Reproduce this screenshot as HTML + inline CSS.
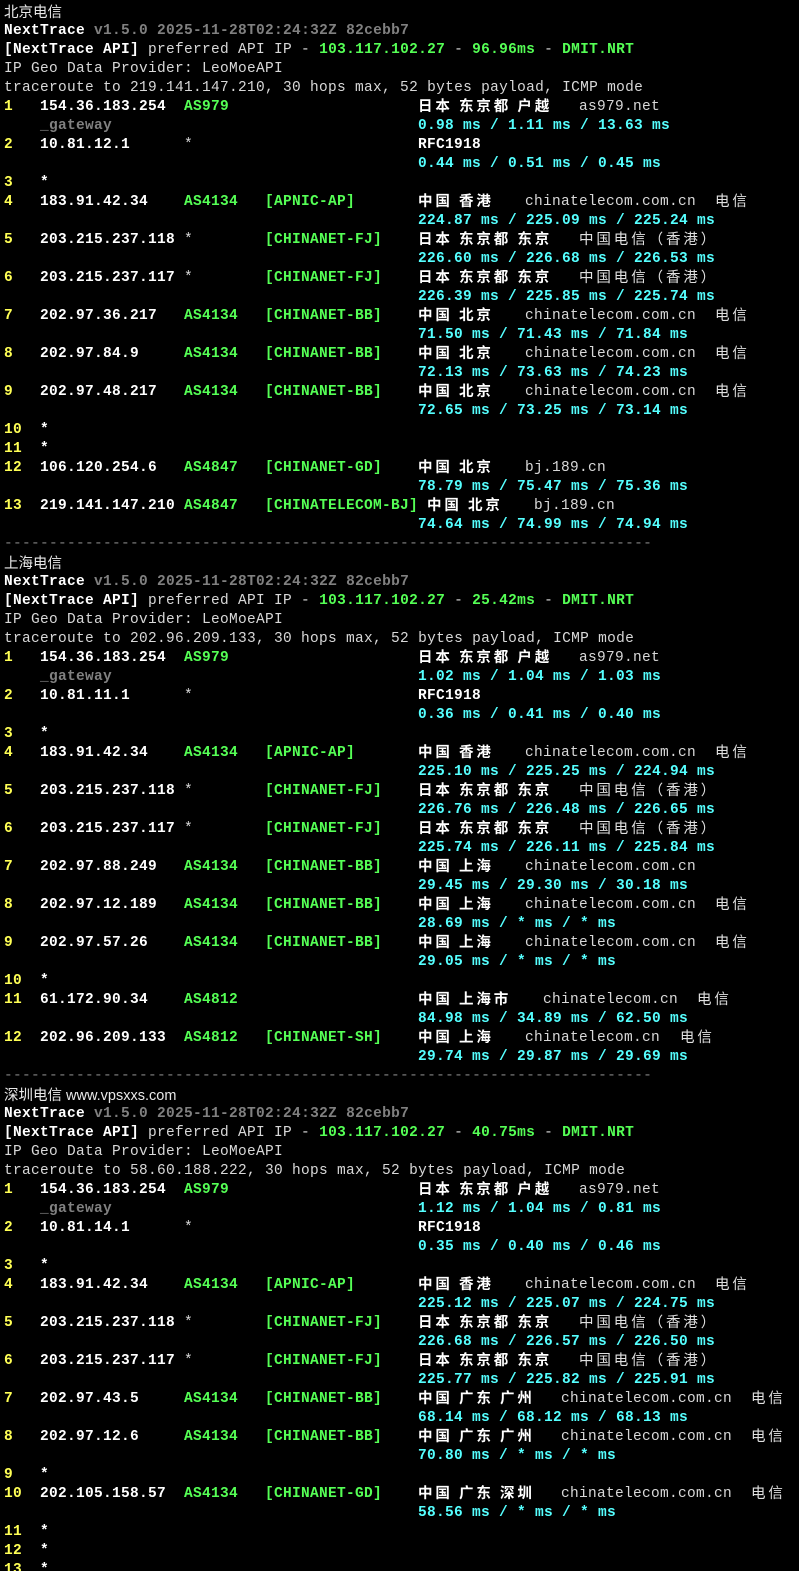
<!DOCTYPE html>
<html><head><meta charset="utf-8"><style>
html,body{margin:0;padding:0;background:#000;width:799px;height:1571px;overflow:hidden}
body{position:relative;font-family:"Liberation Mono","Noto Sans CJK SC",monospace;font-size:14.5px;color:#d8d8d8}
.l{position:absolute;left:0;width:799px;height:19px;line-height:19px;white-space:pre}
.l span{position:absolute;top:0;letter-spacing:0.3px}
.y{color:#ffff55;font-weight:bold}
.w{color:#fff;font-weight:bold}
.g{color:#55ff55;font-weight:bold}
.gy{color:#808080;font-weight:bold}
.gn{color:#808080}
.c{color:#55ffff;font-weight:bold}
.l span.z{font-family:"Liberation Sans","Noto Sans CJK SC",sans-serif;color:#e8e8e8;letter-spacing:0;top:1px}
.l span.cj{font-family:"Noto Sans CJK SC",sans-serif;font-weight:bold;color:#fff;letter-spacing:2.9px;top:-2px}
.l span.cn{font-family:"Noto Sans CJK SC",sans-serif;color:#e0e0e0;letter-spacing:2.9px;top:-2px}
</style></head><body>

<!-- Section 1 -->
<div class="l" style="top:3px"><span class="z" style="left:4px">北京电信</span></div>
<div class="l" style="top:22px"><span style="left:4px"><b style="color:#fff">NextTrace</b> <b class="gy">v1.5.0 2025-11-28T02:24:32Z 82cebb7</b></span></div>
<div class="l" style="top:41px"><span style="left:4px"><b style="color:#fff">[NextTrace API]</b> preferred API IP - <b class="g">103.117.102.27</b> - <b class="g">96.96ms</b> - <b class="g">DMIT.NRT</b></span></div>
<div class="l" style="top:60px"><span style="left:4px">IP Geo Data Provider: LeoMoeAPI</span></div>
<div class="l" style="top:79px"><span style="left:4px">traceroute to 219.141.147.210, 30 hops max, 52 bytes payload, ICMP mode</span></div>
<div class="l" style="top:98px"><span class="y" style="left:4px">1</span><span class="w" style="left:40px">154.36.183.254</span><span class="g" style="left:184px">AS979</span><span class="cj" style="left:418px">日本 东京都 户越</span><span style="left:579px">as979.net</span></div>
<div class="l" style="top:117px"><span class="gy" style="left:40px">_gateway</span><span class="c" style="left:418px">0.98 ms / 1.11 ms / 13.63 ms</span></div>
<div class="l" style="top:136px"><span class="y" style="left:4px">2</span><span class="w" style="left:40px">10.81.12.1</span><span style="left:184px">*</span><span class="w" style="left:418px">RFC1918</span></div>
<div class="l" style="top:155px"><span class="c" style="left:418px">0.44 ms / 0.51 ms / 0.45 ms</span></div>
<div class="l" style="top:174px"><span class="y" style="left:4px">3</span><span class="w" style="left:40px">*</span></div>
<div class="l" style="top:193px"><span class="y" style="left:4px">4</span><span class="w" style="left:40px">183.91.42.34</span><span class="g" style="left:184px">AS4134</span><span class="g" style="left:265px">[APNIC-AP]</span><span class="cj" style="left:418px">中国 香港</span><span style="left:525px">chinatelecom.com.cn</span><span class="cn" style="left:715px">电信</span></div>
<div class="l" style="top:212px"><span class="c" style="left:418px">224.87 ms / 225.09 ms / 225.24 ms</span></div>
<div class="l" style="top:231px"><span class="y" style="left:4px">5</span><span class="w" style="left:40px">203.215.237.118</span><span style="left:184px">*</span><span class="g" style="left:265px">[CHINANET-FJ]</span><span class="cj" style="left:418px">日本 东京都 东京</span><span class="cn" style="left:579px">中国电信（香港）</span></div>
<div class="l" style="top:250px"><span class="c" style="left:418px">226.60 ms / 226.68 ms / 226.53 ms</span></div>
<div class="l" style="top:269px"><span class="y" style="left:4px">6</span><span class="w" style="left:40px">203.215.237.117</span><span style="left:184px">*</span><span class="g" style="left:265px">[CHINANET-FJ]</span><span class="cj" style="left:418px">日本 东京都 东京</span><span class="cn" style="left:579px">中国电信（香港）</span></div>
<div class="l" style="top:288px"><span class="c" style="left:418px">226.39 ms / 225.85 ms / 225.74 ms</span></div>
<div class="l" style="top:307px"><span class="y" style="left:4px">7</span><span class="w" style="left:40px">202.97.36.217</span><span class="g" style="left:184px">AS4134</span><span class="g" style="left:265px">[CHINANET-BB]</span><span class="cj" style="left:418px">中国 北京</span><span style="left:525px">chinatelecom.com.cn</span><span class="cn" style="left:715px">电信</span></div>
<div class="l" style="top:326px"><span class="c" style="left:418px">71.50 ms / 71.43 ms / 71.84 ms</span></div>
<div class="l" style="top:345px"><span class="y" style="left:4px">8</span><span class="w" style="left:40px">202.97.84.9</span><span class="g" style="left:184px">AS4134</span><span class="g" style="left:265px">[CHINANET-BB]</span><span class="cj" style="left:418px">中国 北京</span><span style="left:525px">chinatelecom.com.cn</span><span class="cn" style="left:715px">电信</span></div>
<div class="l" style="top:364px"><span class="c" style="left:418px">72.13 ms / 73.63 ms / 74.23 ms</span></div>
<div class="l" style="top:383px"><span class="y" style="left:4px">9</span><span class="w" style="left:40px">202.97.48.217</span><span class="g" style="left:184px">AS4134</span><span class="g" style="left:265px">[CHINANET-BB]</span><span class="cj" style="left:418px">中国 北京</span><span style="left:525px">chinatelecom.com.cn</span><span class="cn" style="left:715px">电信</span></div>
<div class="l" style="top:402px"><span class="c" style="left:418px">72.65 ms / 73.25 ms / 73.14 ms</span></div>
<div class="l" style="top:421px"><span class="y" style="left:4px">10</span><span class="w" style="left:40px">*</span></div>
<div class="l" style="top:440px"><span class="y" style="left:4px">11</span><span class="w" style="left:40px">*</span></div>
<div class="l" style="top:459px"><span class="y" style="left:4px">12</span><span class="w" style="left:40px">106.120.254.6</span><span class="g" style="left:184px">AS4847</span><span class="g" style="left:265px">[CHINANET-GD]</span><span class="cj" style="left:418px">中国 北京</span><span style="left:525px">bj.189.cn</span></div>
<div class="l" style="top:478px"><span class="c" style="left:418px">78.79 ms / 75.47 ms / 75.36 ms</span></div>
<div class="l" style="top:497px"><span class="y" style="left:4px">13</span><span class="w" style="left:40px">219.141.147.210</span><span class="g" style="left:184px">AS4847</span><span class="g" style="left:265px">[CHINATELECOM-BJ]</span><span class="cj" style="left:427px">中国 北京</span><span style="left:534px">bj.189.cn</span></div>
<div class="l" style="top:516px"><span class="c" style="left:418px">74.64 ms / 74.99 ms / 74.94 ms</span></div>
<div class="l" style="top:535px"><span class="gn" style="left:4px">------------------------------------------------------------------------</span></div>

<!-- Section 2 -->
<div class="l" style="top:554px"><span class="z" style="left:4px">上海电信</span></div>
<div class="l" style="top:573px"><span style="left:4px"><b style="color:#fff">NextTrace</b> <b class="gy">v1.5.0 2025-11-28T02:24:32Z 82cebb7</b></span></div>
<div class="l" style="top:592px"><span style="left:4px"><b style="color:#fff">[NextTrace API]</b> preferred API IP - <b class="g">103.117.102.27</b> - <b class="g">25.42ms</b> - <b class="g">DMIT.NRT</b></span></div>
<div class="l" style="top:611px"><span style="left:4px">IP Geo Data Provider: LeoMoeAPI</span></div>
<div class="l" style="top:630px"><span style="left:4px">traceroute to 202.96.209.133, 30 hops max, 52 bytes payload, ICMP mode</span></div>
<div class="l" style="top:649px"><span class="y" style="left:4px">1</span><span class="w" style="left:40px">154.36.183.254</span><span class="g" style="left:184px">AS979</span><span class="cj" style="left:418px">日本 东京都 户越</span><span style="left:579px">as979.net</span></div>
<div class="l" style="top:668px"><span class="gy" style="left:40px">_gateway</span><span class="c" style="left:418px">1.02 ms / 1.04 ms / 1.03 ms</span></div>
<div class="l" style="top:687px"><span class="y" style="left:4px">2</span><span class="w" style="left:40px">10.81.11.1</span><span style="left:184px">*</span><span class="w" style="left:418px">RFC1918</span></div>
<div class="l" style="top:706px"><span class="c" style="left:418px">0.36 ms / 0.41 ms / 0.40 ms</span></div>
<div class="l" style="top:725px"><span class="y" style="left:4px">3</span><span class="w" style="left:40px">*</span></div>
<div class="l" style="top:744px"><span class="y" style="left:4px">4</span><span class="w" style="left:40px">183.91.42.34</span><span class="g" style="left:184px">AS4134</span><span class="g" style="left:265px">[APNIC-AP]</span><span class="cj" style="left:418px">中国 香港</span><span style="left:525px">chinatelecom.com.cn</span><span class="cn" style="left:715px">电信</span></div>
<div class="l" style="top:763px"><span class="c" style="left:418px">225.10 ms / 225.25 ms / 224.94 ms</span></div>
<div class="l" style="top:782px"><span class="y" style="left:4px">5</span><span class="w" style="left:40px">203.215.237.118</span><span style="left:184px">*</span><span class="g" style="left:265px">[CHINANET-FJ]</span><span class="cj" style="left:418px">日本 东京都 东京</span><span class="cn" style="left:579px">中国电信（香港）</span></div>
<div class="l" style="top:801px"><span class="c" style="left:418px">226.76 ms / 226.48 ms / 226.65 ms</span></div>
<div class="l" style="top:820px"><span class="y" style="left:4px">6</span><span class="w" style="left:40px">203.215.237.117</span><span style="left:184px">*</span><span class="g" style="left:265px">[CHINANET-FJ]</span><span class="cj" style="left:418px">日本 东京都 东京</span><span class="cn" style="left:579px">中国电信（香港）</span></div>
<div class="l" style="top:839px"><span class="c" style="left:418px">225.74 ms / 226.11 ms / 225.84 ms</span></div>
<div class="l" style="top:858px"><span class="y" style="left:4px">7</span><span class="w" style="left:40px">202.97.88.249</span><span class="g" style="left:184px">AS4134</span><span class="g" style="left:265px">[CHINANET-BB]</span><span class="cj" style="left:418px">中国 上海</span><span style="left:525px">chinatelecom.com.cn</span></div>
<div class="l" style="top:877px"><span class="c" style="left:418px">29.45 ms / 29.30 ms / 30.18 ms</span></div>
<div class="l" style="top:896px"><span class="y" style="left:4px">8</span><span class="w" style="left:40px">202.97.12.189</span><span class="g" style="left:184px">AS4134</span><span class="g" style="left:265px">[CHINANET-BB]</span><span class="cj" style="left:418px">中国 上海</span><span style="left:525px">chinatelecom.com.cn</span><span class="cn" style="left:715px">电信</span></div>
<div class="l" style="top:915px"><span class="c" style="left:418px">28.69 ms / * ms / * ms</span></div>
<div class="l" style="top:934px"><span class="y" style="left:4px">9</span><span class="w" style="left:40px">202.97.57.26</span><span class="g" style="left:184px">AS4134</span><span class="g" style="left:265px">[CHINANET-BB]</span><span class="cj" style="left:418px">中国 上海</span><span style="left:525px">chinatelecom.com.cn</span><span class="cn" style="left:715px">电信</span></div>
<div class="l" style="top:953px"><span class="c" style="left:418px">29.05 ms / * ms / * ms</span></div>
<div class="l" style="top:972px"><span class="y" style="left:4px">10</span><span class="w" style="left:40px">*</span></div>
<div class="l" style="top:991px"><span class="y" style="left:4px">11</span><span class="w" style="left:40px">61.172.90.34</span><span class="g" style="left:184px">AS4812</span><span class="cj" style="left:418px">中国 上海市</span><span style="left:543px">chinatelecom.cn</span><span class="cn" style="left:697px">电信</span></div>
<div class="l" style="top:1010px"><span class="c" style="left:418px">84.98 ms / 34.89 ms / 62.50 ms</span></div>
<div class="l" style="top:1029px"><span class="y" style="left:4px">12</span><span class="w" style="left:40px">202.96.209.133</span><span class="g" style="left:184px">AS4812</span><span class="g" style="left:265px">[CHINANET-SH]</span><span class="cj" style="left:418px">中国 上海</span><span style="left:525px">chinatelecom.cn</span><span class="cn" style="left:680px">电信</span></div>
<div class="l" style="top:1048px"><span class="c" style="left:418px">29.74 ms / 29.87 ms / 29.69 ms</span></div>
<div class="l" style="top:1067px"><span class="gn" style="left:4px">------------------------------------------------------------------------</span></div>

<!-- Section 3 -->
<div class="l" style="top:1086px"><span class="z" style="left:4px">深圳电信 www.vpsxxs.com</span></div>
<div class="l" style="top:1105px"><span style="left:4px"><b style="color:#fff">NextTrace</b> <b class="gy">v1.5.0 2025-11-28T02:24:32Z 82cebb7</b></span></div>
<div class="l" style="top:1124px"><span style="left:4px"><b style="color:#fff">[NextTrace API]</b> preferred API IP - <b class="g">103.117.102.27</b> - <b class="g">40.75ms</b> - <b class="g">DMIT.NRT</b></span></div>
<div class="l" style="top:1143px"><span style="left:4px">IP Geo Data Provider: LeoMoeAPI</span></div>
<div class="l" style="top:1162px"><span style="left:4px">traceroute to 58.60.188.222, 30 hops max, 52 bytes payload, ICMP mode</span></div>
<div class="l" style="top:1181px"><span class="y" style="left:4px">1</span><span class="w" style="left:40px">154.36.183.254</span><span class="g" style="left:184px">AS979</span><span class="cj" style="left:418px">日本 东京都 户越</span><span style="left:579px">as979.net</span></div>
<div class="l" style="top:1200px"><span class="gy" style="left:40px">_gateway</span><span class="c" style="left:418px">1.12 ms / 1.04 ms / 0.81 ms</span></div>
<div class="l" style="top:1219px"><span class="y" style="left:4px">2</span><span class="w" style="left:40px">10.81.14.1</span><span style="left:184px">*</span><span class="w" style="left:418px">RFC1918</span></div>
<div class="l" style="top:1238px"><span class="c" style="left:418px">0.35 ms / 0.40 ms / 0.46 ms</span></div>
<div class="l" style="top:1257px"><span class="y" style="left:4px">3</span><span class="w" style="left:40px">*</span></div>
<div class="l" style="top:1276px"><span class="y" style="left:4px">4</span><span class="w" style="left:40px">183.91.42.34</span><span class="g" style="left:184px">AS4134</span><span class="g" style="left:265px">[APNIC-AP]</span><span class="cj" style="left:418px">中国 香港</span><span style="left:525px">chinatelecom.com.cn</span><span class="cn" style="left:715px">电信</span></div>
<div class="l" style="top:1295px"><span class="c" style="left:418px">225.12 ms / 225.07 ms / 224.75 ms</span></div>
<div class="l" style="top:1314px"><span class="y" style="left:4px">5</span><span class="w" style="left:40px">203.215.237.118</span><span style="left:184px">*</span><span class="g" style="left:265px">[CHINANET-FJ]</span><span class="cj" style="left:418px">日本 东京都 东京</span><span class="cn" style="left:579px">中国电信（香港）</span></div>
<div class="l" style="top:1333px"><span class="c" style="left:418px">226.68 ms / 226.57 ms / 226.50 ms</span></div>
<div class="l" style="top:1352px"><span class="y" style="left:4px">6</span><span class="w" style="left:40px">203.215.237.117</span><span style="left:184px">*</span><span class="g" style="left:265px">[CHINANET-FJ]</span><span class="cj" style="left:418px">日本 东京都 东京</span><span class="cn" style="left:579px">中国电信（香港）</span></div>
<div class="l" style="top:1371px"><span class="c" style="left:418px">225.77 ms / 225.82 ms / 225.91 ms</span></div>
<div class="l" style="top:1390px"><span class="y" style="left:4px">7</span><span class="w" style="left:40px">202.97.43.5</span><span class="g" style="left:184px">AS4134</span><span class="g" style="left:265px">[CHINANET-BB]</span><span class="cj" style="left:418px">中国 广东 广州</span><span style="left:561px">chinatelecom.com.cn</span><span class="cn" style="left:751px">电信</span></div>
<div class="l" style="top:1409px"><span class="c" style="left:418px">68.14 ms / 68.12 ms / 68.13 ms</span></div>
<div class="l" style="top:1428px"><span class="y" style="left:4px">8</span><span class="w" style="left:40px">202.97.12.6</span><span class="g" style="left:184px">AS4134</span><span class="g" style="left:265px">[CHINANET-BB]</span><span class="cj" style="left:418px">中国 广东 广州</span><span style="left:561px">chinatelecom.com.cn</span><span class="cn" style="left:751px">电信</span></div>
<div class="l" style="top:1447px"><span class="c" style="left:418px">70.80 ms / * ms / * ms</span></div>
<div class="l" style="top:1466px"><span class="y" style="left:4px">9</span><span class="w" style="left:40px">*</span></div>
<div class="l" style="top:1485px"><span class="y" style="left:4px">10</span><span class="w" style="left:40px">202.105.158.57</span><span class="g" style="left:184px">AS4134</span><span class="g" style="left:265px">[CHINANET-GD]</span><span class="cj" style="left:418px">中国 广东 深圳</span><span style="left:561px">chinatelecom.com.cn</span><span class="cn" style="left:751px">电信</span></div>
<div class="l" style="top:1504px"><span class="c" style="left:418px">58.56 ms / * ms / * ms</span></div>
<div class="l" style="top:1523px"><span class="y" style="left:4px">11</span><span class="w" style="left:40px">*</span></div>
<div class="l" style="top:1542px"><span class="y" style="left:4px">12</span><span class="w" style="left:40px">*</span></div>
<div class="l" style="top:1561px"><span class="y" style="left:4px">13</span><span class="w" style="left:40px">*</span></div>
</body></html>
